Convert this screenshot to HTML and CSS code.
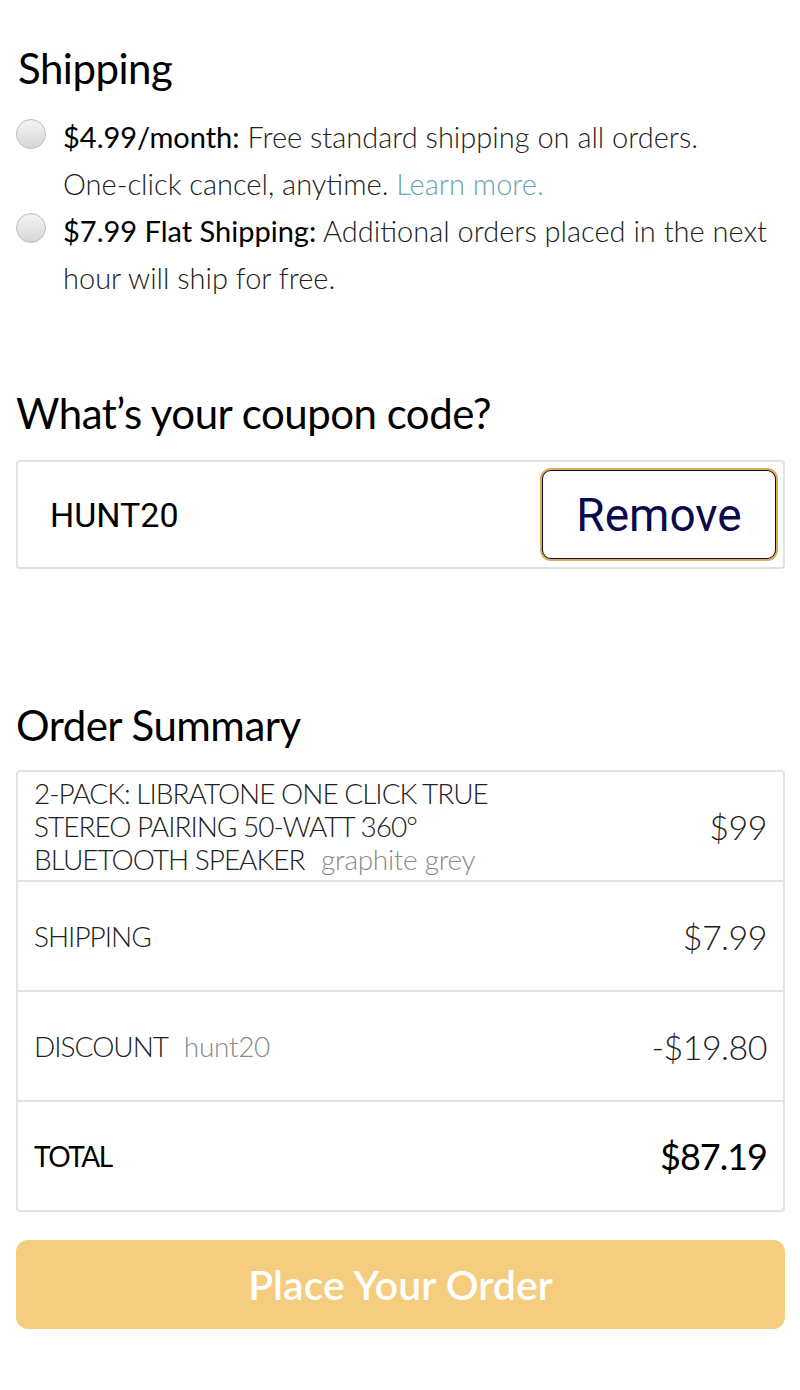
FILE: index.html
```html
<!DOCTYPE html>
<html lang="en">
<head>
    <meta charset="UTF-8">
    <meta name="viewport" content="width=device-width, initial-scale=1.0">
    <title>Checkout</title>
    <link rel="stylesheet" href="styles.css">
</head>
<body>

    <section class="shipping">
        <h2>Shipping</h2>
        <label class="option">
            <input type="radio" name="ship" value="monthly">
            <span class="option-text"><b>$4.99/month:</b> Free standard shipping on all orders. One&#8209;click cancel, anytime. <a href="#">Learn more.</a></span>
        </label>
        <label class="option">
            <input type="radio" name="ship" value="flat">
            <span class="option-text"><b>$7.99 Flat Shipping:</b> Additional orders placed in the next hour will ship for free.</span>
        </label>
    </section>

    <section class="coupon">
        <h2>What’s your coupon code?</h2>
        <div class="coupon-box">
            <input type="text" id="coupon" value="HUNT20">
            <button class="remove-btn">Remove</button>
        </div>
    </section>

    <section class="summary">
        <h2>Order Summary</h2>
        <div class="summary-table">
            <div class="row row-item">
                <div class="label">2-PACK: LIBRATONE ONE CLICK TRUE STEREO PAIRING 50-WATT 360° BLUETOOTH SPEAKER <span class="note">graphite grey</span></div>
                <div class="amount">$99</div>
            </div>
            <div class="row">
                <div class="label">SHIPPING</div>
                <div class="amount">$7.99</div>
            </div>
            <div class="row">
                <div class="label">DISCOUNT <span class="note">hunt20</span></div>
                <div class="amount">-$19.80</div>
            </div>
            <div class="row row-total">
                <div class="label">TOTAL</div>
                <div class="amount">$87.19</div>
            </div>
        </div>
    </section>

    <button class="order-btn">Place Your Order</button>

</body>
</html>
```

FILE: styles.css
```css
body {
    margin: 0;
    padding: 0 15px 0 16px;
    font-family: Lato, "Open Sans", sans-serif;
    color: #111;
    background: #fff;
}
h2 {
    font-weight: 400;
    font-size: 42px;
    letter-spacing: -0.5px;
    margin: 0;
    color: #000;
}
.shipping {
    padding-top: 43px;
}
.shipping h2 {
    margin-left: 2px;
    margin-bottom: 20px;
}
.option {
    display: flex;
    align-items: flex-start;
    font-size: 29px;
    font-weight: 300;
    line-height: 47px;
    color: #222;
}
.option input[type="radio"] {
    appearance: none;
    -webkit-appearance: none;
    flex: none;
    width: 30px;
    height: 30px;
    margin: 6px 17px 0 0;
    border-radius: 50%;
    border: 1px solid #bdbdbd;
    background: linear-gradient(#f4f4f4, #d6d6d6);
}
.option b {
    font-weight: 400;
    color: #000;
}
.option a {
    color: #6aa3b8;
    text-decoration: none;
}
.coupon {
    margin-top: 87px;
}
.coupon h2 {
    margin-bottom: 22px;
}
.coupon-box {
    display: flex;
    align-items: center;
    justify-content: space-between;
    height: 105px;
    border: 2px solid #e2e2e2;
    border-radius: 4px;
    padding: 0 6px 0 32px;
}
.coupon-box input {
    border: none;
    outline: none;
    font-family: Roboto, sans-serif;
    font-weight: 400;
    font-size: 34px;
    color: #000;
    width: 300px;
    padding: 0;
}
.remove-btn {
    width: 236px;
    height: 91px;
    border: 2px solid #0e0e3a;
    border-radius: 10px;
    outline: 2px solid #d8ad5a;
    outline-offset: -1px;
    background: #fff;
    font-family: Roboto, sans-serif;
    font-size: 46px;
    color: #0a0a4e;
    cursor: pointer;
}
.summary {
    margin-top: 131px;
}
.summary h2 {
    margin-bottom: 20px;
}
.summary-table {
    border: 2px solid #e2e2e2;
    border-radius: 4px;
}
.row {
    display: flex;
    align-items: center;
    justify-content: space-between;
    height: 108px;
    padding: 0 16px;
    border-top: 2px solid #e2e2e2;
    font-size: 28px;
    font-weight: 300;
    color: #222;
}
.row:first-child {
    border-top: none;
}
.row-item .label {
    width: 470px;
    line-height: 33px;
}
.label {
    letter-spacing: -1px;
}
.note {
    color: #8a8a8a;
    text-transform: none;
    letter-spacing: -0.3px;
    margin-left: 10px;
}
.amount {
    font-size: 34px;
    letter-spacing: -0.5px;
}
.row-total .label {
    font-weight: 400;
    color: #000;
    letter-spacing: -1.5px;
}
.row-total .amount {
    font-weight: 400;
    font-size: 36px;
    letter-spacing: -1px;
    color: #000;
}
.order-btn {
    display: block;
    width: 100%;
    height: 89px;
    margin-top: 28px;
    border: none;
    border-radius: 12px;
    background: #f4cd7e;
    color: #fff;
    font-family: Lato, sans-serif;
    font-size: 41px;
    font-weight: 600;
    cursor: pointer;
}
```
